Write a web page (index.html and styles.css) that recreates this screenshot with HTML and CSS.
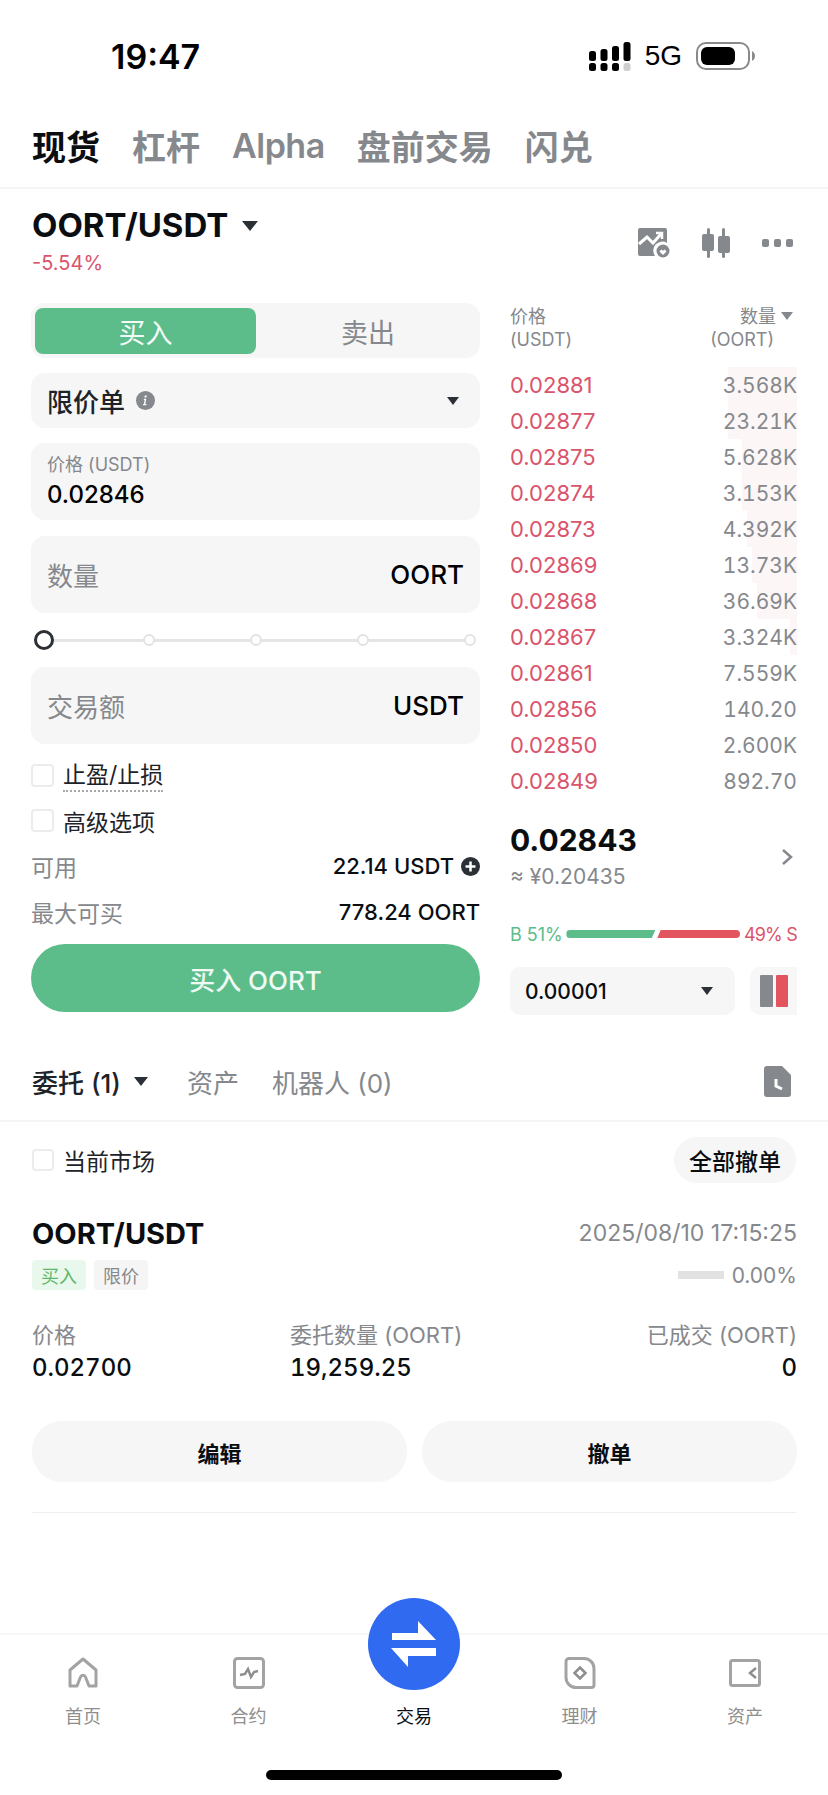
FILE: index.html
```html
<!DOCTYPE html>
<html lang="zh-CN">
<head>
  <meta charset="UTF-8">
  <meta name="viewport" content="width=device-width, initial-scale=1.0">
  <title>现货交易</title>
  <link rel="stylesheet" href="styles.css">
</head>
<body>
  <div class="status-bar">
    <span class="status-time">19:47</span>
    <div class="status-right">
      <svg class="signal" width="42" height="29" viewBox="0 0 42 29">
        <g fill="#000">
          <rect x="0" y="9" width="7" height="10" rx="2.500"/><rect x="0" y="21" width="7" height="8" rx="2.500"/>
          <rect x="11.500" y="7" width="7" height="12" rx="2.500"/><rect x="11.500" y="21" width="7" height="8" rx="2.500"/>
          <rect x="23" y="4" width="7" height="15" rx="2.500"/><rect x="23" y="21" width="7" height="8" rx="2.500"/>
          <rect x="34.500" y="0" width="7" height="19" rx="2.500"/>
        </g>
        <rect x="34.500" y="21" width="7" height="8" rx="2.500" fill="#cfcfcf"/>
      </svg>
      <span class="status-net">5G</span>
      <svg class="battery" width="60" height="28" viewBox="0 0 60 28">
        <rect x="1" y="1" width="52" height="26" rx="9" fill="#fff" stroke="#8a8a8a" stroke-width="2"/>
        <rect x="5" y="5" width="34" height="18" rx="6" fill="#000"/>
        <path d="M56 9c2 1 3 3 3 5s-1 4-3 5z" fill="#8a8a8a"/>
      </svg>
    </div>
  </div>

  <nav class="top-tabs">
    <span class="top-tab active">现货</span>
    <span class="top-tab">杠杆</span>
    <span class="top-tab top-tab-latin">Alpha</span>
    <span class="top-tab">盘前交易</span>
    <span class="top-tab">闪兑</span>
  </nav>

  <header class="pair-head">
    <div>
      <div class="pair-name">OORT/USDT <i class="caret caret-lg"></i></div>
      <div class="pair-change">-5.54%</div>
    </div>
    <div class="pair-icons">
      <svg width="32" height="30" viewBox="0 0 32 30">
        <path d="M2 0h25a2 2 0 0 1 2 2v13a9 9 0 0 0-12 13H2a2 2 0 0 1-2-2V2a2 2 0 0 1 2-2z" fill="#85888c"/>
        <path d="M1 16l8-7 6 6 8-9" fill="none" stroke="#fff" stroke-width="3"/>
        <path d="M18 5h6v6" fill="none" stroke="#fff" stroke-width="2.500"/>
        <circle cx="25" cy="23" r="6.500" fill="#85888c"/>
        <path d="M25 27l-3.500-3.500 1.800-2 1.700 1.300 1.700-1.300 1.800 2z" fill="#fff"/>
      </svg>
      <svg width="28" height="30" viewBox="0 0 28 30">
        <g fill="#85888c">
          <rect x="5" y="0" width="3" height="30" rx="1.500"/><rect x="0" y="6" width="12" height="17" rx="2"/>
          <rect x="20" y="0" width="3" height="30" rx="1.500"/><rect x="16" y="8" width="12" height="17" rx="2"/>
        </g>
      </svg>
      <svg width="31" height="8" viewBox="0 0 31 8">
        <g fill="#85888c"><rect width="7" height="8" rx="2"/><rect x="12" width="7" height="8" rx="2"/><rect x="24" width="7" height="8" rx="2"/></g>
      </svg>
    </div>
  </header>

  <main class="trade">
    <section class="form">
      <div class="side-switch">
        <span class="side side-buy">买入</span>
        <span class="side side-sell">卖出</span>
      </div>

      <div class="field field-select">
        <span class="type-name">限价单</span>
        <svg class="info" width="19" height="19" viewBox="0 0 19 19">
          <circle cx="9.500" cy="9.500" r="9.500" fill="#85888c"/>
          <path d="M10.800 4.500l-.4 2h-2l.4-2zM10.300 7.800l-1 5.200h1.200l-.2 1.300H6.900l.2-1.300h.8l.7-3.900h-.8l.2-1.300z" fill="#fff"/>
        </svg>
        <i class="caret caret-right"></i>
      </div>

      <div class="field field-price">
        <span class="field-label">价格 (USDT)</span>
        <span class="field-value">0.02846</span>
      </div>

      <div class="field field-input">
        <span class="field-hint">数量</span>
        <span class="field-unit">OORT</span>
      </div>

      <div class="slider">
        <span class="slider-knob"></span>
        <span class="slider-dot"></span>
        <span class="slider-dot"></span>
        <span class="slider-dot"></span>
        <span class="slider-dot"></span>
      </div>

      <div class="field field-input">
        <span class="field-hint">交易额</span>
        <span class="field-unit">USDT</span>
      </div>

      <label class="check-row"><i class="check"></i><span class="dotted">止盈/止损</span></label>
      <label class="check-row"><i class="check"></i><span>高级选项</span></label>

      <div class="info-row">
        <span class="info-key">可用</span>
        <span class="info-val">22.14 USDT
          <svg width="19" height="19" viewBox="0 0 19 19">
            <circle cx="9.500" cy="9.500" r="9.500" fill="#2b2f36"/>
            <path d="M9.500 4.500v10M4.500 9.500h10" stroke="#fff" stroke-width="2.500"/>
          </svg>
        </span>
      </div>
      <div class="info-row">
        <span class="info-key">最大可买</span>
        <span class="info-val">778.24 OORT</span>
      </div>

      <div class="buy-btn">买入 OORT</div>
    </section>

    <section class="book">
      <div class="book-head">
        <div>价格<br>(USDT)</div>
        <div class="book-head-r">
          <div class="book-head-qty">数量 <i class="caret caret-sm"></i></div>
          <div class="book-head-unit">(OORT)</div>
        </div>
      </div>

      <div class="book-rows">
        <div class="book-row"><i class="depth" style="width:69px"></i><span class="ask">0.02881</span><span class="qty">3.568K</span></div>
        <div class="book-row"><i class="depth" style="width:69px"></i><span class="ask">0.02877</span><span class="qty">23.21K</span></div>
        <div class="book-row"><i class="depth" style="width:55px"></i><span class="ask">0.02875</span><span class="qty">5.628K</span></div>
        <div class="book-row"><i class="depth" style="width:55px"></i><span class="ask">0.02874</span><span class="qty">3.153K</span></div>
        <div class="book-row"><i class="depth" style="width:50px"></i><span class="ask">0.02873</span><span class="qty">4.392K</span></div>
        <div class="book-row"><i class="depth" style="width:45px"></i><span class="ask">0.02869</span><span class="qty">13.73K</span></div>
        <div class="book-row"><i class="depth" style="width:40px"></i><span class="ask">0.02868</span><span class="qty">36.69K</span></div>
        <div class="book-row"><i class="depth" style="width:7px"></i><span class="ask">0.02867</span><span class="qty">3.324K</span></div>
        <div class="book-row"><span class="ask">0.02861</span><span class="qty">7.559K</span></div>
        <div class="book-row"><span class="ask">0.02856</span><span class="qty">140.20</span></div>
        <div class="book-row"><span class="ask">0.02850</span><span class="qty">2.600K</span></div>
        <div class="book-row"><span class="ask">0.02849</span><span class="qty">892.70</span></div>
      </div>

      <div class="last-price">
        <div>
          <div class="last-num">0.02843</div>
          <div class="last-cny">≈ ¥0.20435</div>
        </div>
        <svg width="12" height="18" viewBox="0 0 12 18"><path d="M2 2l8 7-8 7" fill="none" stroke="#85888c" stroke-width="2.500"/></svg>
      </div>

      <div class="ratio">
        <span class="ratio-b">B 51%</span>
        <div class="ratio-bar"><i class="ratio-buy"></i><i class="ratio-sell"></i></div>
        <span class="ratio-s">49% S</span>
      </div>

      <div class="book-tools">
        <div class="step-select">0.00001 <i class="caret"></i></div>
        <div class="view-btn"><i class="view-grey"></i><i class="view-red"></i></div>
      </div>
    </section>
  </main>

  <div class="order-tabs">
    <span class="order-tab active">委托 (1) <i class="caret caret-tab"></i></span>
    <span class="order-tab">资产</span>
    <span class="order-tab">机器人 (0)</span>
    <svg class="order-file" width="27" height="31" viewBox="0 0 27 31">
      <path d="M3 0h15l9 9v19a3 3 0 0 1-3 3H3a3 3 0 0 1-3-3V3a3 3 0 0 1 3-3z" fill="#85888c"/>
      <path d="M12 13v7l6 3" fill="none" stroke="#fff" stroke-width="3"/>
    </svg>
  </div>

  <div class="order-filter">
    <label class="check-row check-row-sm"><i class="check"></i><span>当前市场</span></label>
    <span class="cancel-all">全部撤单</span>
  </div>

  <article class="order">
    <div class="order-top">
      <span class="order-pair">OORT/USDT</span>
      <span class="order-date">2025/08/10 17:15:25</span>
    </div>
    <div class="order-tags">
      <div class="tags">
        <span class="tag tag-buy">买入</span>
        <span class="tag">限价</span>
      </div>
      <div class="order-progress"><i class="progress-bar"></i>0.00%</div>
    </div>
    <div class="order-cols">
      <div><span class="col-key">价格</span><span class="col-val">0.02700</span></div>
      <div><span class="col-key">委托数量 (OORT)</span><span class="col-val">19,259.25</span></div>
      <div class="col-right"><span class="col-key">已成交 (OORT)</span><span class="col-val">0</span></div>
    </div>
    <div class="order-actions">
      <span class="action-btn">编辑</span>
      <span class="action-btn">撤单</span>
    </div>
  </article>

  <footer class="tabbar">
    <div class="bar-item">
      <svg width="32" height="32" viewBox="0 0 32 32"><path d="M3 29V13L16 2l13 11v16h-7l-3.500-9a2.700 2.700 0 0 0-5 0L10 29z" fill="none" stroke="#a3a3a3" stroke-width="3" stroke-linejoin="round"/></svg>
      <span>首页</span>
    </div>
    <div class="bar-item">
      <svg width="32" height="32" viewBox="0 0 32 32"><rect x="1.500" y="1.500" width="29" height="29" rx="3" fill="none" stroke="#a3a3a3" stroke-width="3"/><path d="M7 18l5-1 3-5 3 8 3-5 4-1" fill="none" stroke="#8e8e8e" stroke-width="2.500"/></svg>
      <span>合约</span>
    </div>
    <div class="bar-item bar-item-active">
      <div class="trade-fab">
        <svg width="46" height="46" viewBox="0 0 46 46"><path d="M1 12h26V0l18 19H1zM45 27v8H17v11L0 27z" fill="#fff"/></svg>
      </div>
      <span>交易</span>
    </div>
    <div class="bar-item">
      <svg width="32" height="32" viewBox="0 0 32 32"><path d="M5 1.500h15a10 10 0 0 1 10 10V28a2.500 2.500 0 0 1-2.500 2.500H12a10 10 0 0 1-10-10V4.500a3 3 0 0 1 3-3z" fill="none" stroke="#a3a3a3" stroke-width="3"/><path d="M16 10.500l5.500 5.500-5.500 5.500-5.500-5.500z" fill="none" stroke="#8e8e8e" stroke-width="2.500"/></svg>
      <span>理财</span>
    </div>
    <div class="bar-item">
      <svg width="32" height="32" viewBox="0 0 32 32"><rect x="1.500" y="3.500" width="29" height="25" rx="2" fill="none" stroke="#a3a3a3" stroke-width="3"/><path d="M27 11l-6 5 6 5" fill="none" stroke="#8e8e8e" stroke-width="2.500"/></svg>
      <span>资产</span>
    </div>
  </footer>
  <div class="home-bar"></div>
</body>
</html>
```

FILE: styles.css
```css
* {
  margin: 0;
  padding: 0;
  box-sizing: border-box;
}

body {
  font-family: Inter, "Noto Sans CJK SC", sans-serif;
  background: #fff;
  color: #0b0e11;
  width: 828px;
  height: 1795px;
  overflow: hidden;
  position: relative;
}

i {
  font-style: normal;
}

.caret {
  display: inline-block;
  width: 0;
  height: 0;
  border-left: 6px solid transparent;
  border-right: 6px solid transparent;
  border-top: 8px solid #2b2f36;
}

.caret-lg {
  border-left-width: 8px;
  border-right-width: 8px;
  border-top-width: 10px;
  margin-left: 6px;
  vertical-align: 6px;
}

.caret-sm {
  border-top-color: #85888c;
  vertical-align: 3px;
}

.caret-tab {
  border-left-width: 7px;
  border-right-width: 7px;
  border-top-width: 9px;
}

.caret-right {
  margin-left: auto;
  margin-right: 5px;
}

/* status bar */
.status-bar {
  height: 112px;
  display: flex;
  justify-content: space-between;
  align-items: center;
  padding: 0 72px 0 111px;
}

.status-time {
  font-size: 34px;
  font-weight: 600;
  color: #000;
}

.status-right {
  display: flex;
  align-items: center;
  gap: 14px;
}

.status-net {
  font-size: 28px;
  color: #000;
  font-family: "Liberation Sans", sans-serif;
}

/* top tabs */
.top-tabs {
  height: 77px;
  display: flex;
  align-items: center;
  gap: 32px;
  padding: 0 32px 8px;
  border-bottom: 2px solid #f5f5f5;
}

.top-tab {
  font-size: 34px;
  font-weight: 600;
  color: #85888c;
}

.top-tab-latin {
  letter-spacing: -0.5px;
}

.top-tab.active {
  color: #0b0e11;
  font-weight: 700;
}

/* pair header */
.pair-head {
  display: flex;
  justify-content: space-between;
  align-items: center;
  padding: 10px 35px 0 32px;
  height: 92px;
}

.pair-name {
  font-size: 33px;
  font-weight: 700;
  line-height: 42px;
}

.pair-change {
  font-size: 20px;
  color: #d9546c;
  line-height: 28px;
  margin-top: 3px;
}

.pair-icons {
  display: flex;
  align-items: center;
  gap: 32px;
  padding-top: 5px;
}

/* main trade area */
.trade {
  display: flex;
  justify-content: space-between;
  padding: 22px 31px 0;
  height: 761px;
}

.form {
  width: 449px;
}

.side-switch {
  height: 55px;
  display: flex;
  align-items: stretch;
  padding: 5px 0 4px 4px;
  background: #f6f6f7;
  border-radius: 14px;
}

.side {
  display: flex;
  align-items: center;
  justify-content: center;
  font-size: 27px;
  color: #85888c;
  border-radius: 8px;
}

.side-buy {
  width: 221px;
  background: #5cbd8b;
  color: #f2fbf6;
}

.side-sell {
  flex: 1;
}

.field {
  background: #f6f6f7;
  border-radius: 14px;
  padding: 0 16px;
}

.field-select {
  height: 55px;
  margin-top: 15px;
  display: flex;
  align-items: center;
  gap: 11px;
}

.type-name {
  font-size: 26px;
  font-weight: 500;
  color: #1e2329;
}

.info {
  display: block;
}

.field-price {
  height: 77px;
  margin-top: 15px;
  display: flex;
  flex-direction: column;
  justify-content: center;
}

.field-label {
  font-size: 18px;
  color: #85888c;
  line-height: 26px;
}

.field-value {
  font-size: 24px;
  font-weight: 500;
  color: #000;
  line-height: 34px;
}

.field-input {
  height: 77px;
  margin-top: 16px;
  display: flex;
  align-items: center;
  justify-content: space-between;
}

.slider + .field-input {
  margin-top: 0;
}

.field-hint {
  font-size: 26px;
  color: #85888c;
}

.field-unit {
  font-size: 26px;
  font-weight: 500;
  color: #000;
}

/* slider */
.slider {
  height: 54px;
  display: flex;
  align-items: center;
  gap: 95px;
  padding-left: 3px;
  position: relative;
}

.slider::before {
  content: "";
  position: absolute;
  left: 10px;
  right: 10px;
  top: 26px;
  height: 3px;
  background: #e5e5e6;
}

.slider-knob {
  width: 20px;
  height: 20px;
  margin-right: -6px;
  border: 3px solid #2b2f36;
  border-radius: 50%;
  background: #fff;
  position: relative;
}

.slider-dot {
  width: 12px;
  height: 12px;
  border: 2px solid #e3e3e4;
  border-radius: 50%;
  background: #fff;
  position: relative;
}

/* checkbox rows */
.check-row {
  display: flex;
  align-items: center;
  gap: 9px;
  font-size: 23px;
  color: #1e2329;
  height: 45px;
}

.form .check-row:first-of-type {
  margin-top: 9px;
}

.check {
  width: 23px;
  height: 23px;
  border: 2px solid #ececec;
  border-radius: 4px;
  background: #fff;
}

.dotted {
  border-bottom: 2px dotted #a8a8a8;
  line-height: 30px;
}

.info-row {
  display: flex;
  justify-content: space-between;
  align-items: center;
  height: 46px;
}

.info-key {
  font-size: 23px;
  color: #85888c;
}

.info-val {
  display: flex;
  align-items: center;
  gap: 7px;
  font-size: 22px;
  font-weight: 500;
  color: #0b0e11;
}

.buy-btn {
  height: 68px;
  margin-top: 9px;
  border-radius: 34px;
  background: #5cbd8b;
  color: #eefaf3;
  font-size: 26px;
  font-weight: 500;
  display: flex;
  align-items: center;
  justify-content: center;
}

/* order book */
.book {
  width: 287px;
}

.book-head {
  display: flex;
  justify-content: space-between;
  font-size: 18px;
  line-height: 23px;
  color: #85888c;
  height: 58px;
  padding-top: 2px;
}

.book-head-r {
  text-align: right;
}

.book-head-qty {
  padding-right: 4px;
}

.book-head-unit {
  padding-right: 23px;
}

.book-rows {
  margin-top: 6px;
}

.book-row {
  position: relative;
  height: 36px;
  display: flex;
  justify-content: space-between;
  align-items: center;
  font-size: 22px;
  color: #85888c;
}

.book-row span {
  position: relative;
}

.qty {
  font-size: 21px;
  font-variant-numeric: tabular-nums;
}

.ask {
  color: #d9546c;
}

.depth {
  position: absolute;
  top: 0;
  right: 0;
  bottom: 0;
  background: #fdf6f7;
}

.last-price {
  display: flex;
  justify-content: space-between;
  align-items: center;
  padding-right: 4px;
  margin-top: 21px;
}

.last-num {
  font-size: 30px;
  font-weight: 700;
  line-height: 40px;
}

.last-cny {
  font-size: 21px;
  color: #85888c;
  line-height: 34px;
}

.ratio {
  display: flex;
  align-items: center;
  justify-content: space-between;
  margin-top: 28px;
  font-size: 18px;
  height: 24px;
}

.ratio-b {
  color: #5cbd8b;
}

.ratio-s {
  color: #d9546c;
  letter-spacing: -0.8px;
}

.ratio-bar {
  display: flex;
  width: 174px;
  gap: 2px;
}

.ratio-buy {
  display: block;
  width: 89px;
  height: 8px;
  background: #5cbd8b;
  border-radius: 4px 0 0 4px;
  clip-path: polygon(0 0, 100% 0, 96% 100%, 0 100%);
}

.ratio-sell {
  display: block;
  flex: 1;
  height: 8px;
  background: #e2555f;
  border-radius: 0 4px 4px 0;
  clip-path: polygon(4% 0, 100% 0, 100% 100%, 0 100%);
}

.book-tools {
  display: flex;
  justify-content: space-between;
  margin-top: 21px;
}

.step-select {
  width: 225px;
  height: 48px;
  background: #f6f6f7;
  border-radius: 10px;
  display: flex;
  align-items: center;
  justify-content: space-between;
  padding: 0 22px 0 15px;
  font-size: 21px;
  font-weight: 500;
}

.view-btn {
  width: 47px;
  height: 48px;
  background: #f7f7f8;
  border-radius: 10px 0 0 10px;
  display: flex;
  gap: 3px;
  padding: 8px 9px 8px 10px;
}

.view-grey,
.view-red {
  flex: 1;
  border-radius: 1px;
}

.view-grey {
  background: #85888c;
}

.view-red {
  background: #e2555f;
}

/* orders */
.order-tabs {
  height: 80px;
  padding: 0 37px 0 32px;
  display: flex;
  align-items: center;
  gap: 33px;
  border-bottom: 2px solid #f5f5f5;
}

.order-tab {
  font-size: 26px;
  color: #85888c;
  display: flex;
  align-items: center;
  gap: 13px;
}

.order-tab.active {
  color: #1e2329;
  font-weight: 500;
  margin-right: 6px;
}

.order-file {
  margin-left: auto;
}

.order-filter {
  display: flex;
  justify-content: space-between;
  align-items: center;
  padding: 15px 32px 0;
}

.check-row-sm .check {
  width: 22px;
  height: 22px;
}

.cancel-all {
  width: 122px;
  height: 46px;
  border-radius: 23px;
  background: #f6f6f7;
  font-size: 23px;
  font-weight: 500;
  display: flex;
  align-items: center;
  justify-content: center;
}

.order {
  padding: 28px 31px 0 32px;
  height: 330px;
  position: relative;
}

.order::after {
  content: "";
  position: absolute;
  left: 32px;
  right: 32px;
  bottom: 0;
  height: 1px;
  background: #efefef;
}

.order-top {
  display: flex;
  justify-content: space-between;
  align-items: center;
  height: 44px;
}

.order-pair {
  font-size: 29px;
  font-weight: 700;
}

.order-date {
  font-size: 23px;
  color: #85888c;
}

.order-tags {
  display: flex;
  justify-content: space-between;
  align-items: center;
  margin-top: 5px;
}

.tags {
  display: flex;
  gap: 8px;
}

.tag {
  width: 54px;
  height: 30px;
  border-radius: 4px;
  background: #f5f5f6;
  color: #85888c;
  font-size: 18px;
  display: flex;
  align-items: center;
  justify-content: center;
}

.tag-buy {
  background: #e9f8ec;
  color: #5cb86a;
}

.order-progress {
  display: flex;
  align-items: center;
  gap: 8px;
  font-size: 21px;
  color: #85888c;
}

.progress-bar {
  width: 46px;
  height: 8px;
  background: #e2e2e3;
}

.order-cols {
  display: grid;
  grid-template-columns: 258px 1fr 1fr;
  margin-top: 29px;
}

.col-key,
.col-val {
  display: block;
}

.col-key {
  font-size: 22px;
  color: #85888c;
  line-height: 32px;
}

.col-val {
  font-size: 24px;
  font-weight: 500;
  line-height: 34px;
  font-variant-numeric: tabular-nums;
}

.col-right {
  text-align: right;
}

.order-actions {
  display: flex;
  gap: 15px;
  margin-top: 36px;
}

.action-btn {
  flex: 1;
  height: 61px;
  border-radius: 30px;
  background: #f6f6f7;
  font-size: 22px;
  font-weight: 600;
  display: flex;
  align-items: center;
  justify-content: center;
}

/* bottom tab bar */
.tabbar {
  position: absolute;
  left: 0;
  right: 0;
  top: 1633px;
  height: 106px;
  border-top: 2px solid #f7f7f7;
  display: grid;
  grid-template-columns: repeat(5, 165.500px);
  justify-content: center;
}

.bar-item {
  position: relative;
  display: flex;
  flex-direction: column;
  align-items: center;
  justify-content: flex-end;
  gap: 13px;
  padding-bottom: 11px;
  font-size: 18px;
  color: #8e8e8e;
}

.bar-item-active {
  color: #0b0e11;
}

.trade-fab {
  position: absolute;
  top: -37px;
  left: 37px;
  width: 92px;
  height: 92px;
  border-radius: 50%;
  background: #2f6af0;
  display: flex;
  align-items: center;
  justify-content: center;
}

.home-bar {
  position: absolute;
  left: 266px;
  top: 1770px;
  width: 296px;
  height: 10px;
  border-radius: 5px;
  background: #000;
}
```
